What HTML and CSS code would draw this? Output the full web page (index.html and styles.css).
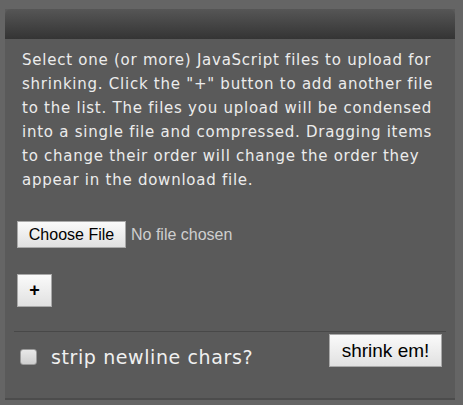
FILE: index.html
```html
<!DOCTYPE html>
<html>
<head>
<meta charset="utf-8">
<link rel="stylesheet" href="styles.css">
</head>
<body>
<div class="panel">
  <div class="panel-head"></div>
  <div class="panel-body">
    <p class="intro">Select one (or more) JavaScript files to upload for shrinking. Click the "+" button to add another file to the list. The files you upload will be condensed into a single file and compressed. Dragging items to change their order will change the order they appear in the download file.</p>
    <div class="file-row">
      <span class="btn file-btn">Choose File</span><span class="file-none">No file chosen</span>
    </div>
    <div class="add-row"><span class="btn add-btn">+</span></div>
    <div class="footer">
      <label class="strip"><span class="check"></span>strip newline chars?</label>
      <span class="btn shrink-btn">shrink em!</span>
    </div>
  </div>
</div>
</body>
</html>
```
FILE: styles.css
```css
html, body {
  margin: 0;
  padding: 0;
  background: #656565;
  height: 100%;
}
.panel {
  width: 450px;
  margin: 9px 0 0 5px;
  background: #5a5a5a;
  border-bottom: 2px solid #4c4c4c;
}
.panel-head {
  height: 30px;
  border-radius: 6px 6px 0 0;
  background: linear-gradient(#565656, #343434);
}
.panel-body {
  padding: 9px 9px 30px 9px;
}
.intro {
  margin: 0 0 0 8px;
  font-family: "DejaVu Sans", Verdana, sans-serif;
  font-size: 15px;
  letter-spacing: 0.75px;
  line-height: 24px;
  color: #ececec;
}
.btn {
  display: inline-flex;
  align-items: center;
  justify-content: center;
  box-sizing: border-box;
  border: 1px solid #a9a9a9;
  background: linear-gradient(#fafafa, #e1e1e1);
  color: #000;
  font-family: "Liberation Sans", Arial, sans-serif;
}
.file-row {
  display: flex;
  align-items: center;
  margin: 29px 0 0 3px;
  font-family: "Liberation Sans", Arial, sans-serif;
  font-size: 16px;
}
.file-btn {
  width: 109px;
  height: 27px;
  font-size: 16px;
  margin-right: 5px;
}
.file-none {
  color: #cfcfcf;
}
.add-row {
  margin: 26px 0 0 3px;
  display: flex;
}
.add-btn {
  width: 35px;
  height: 33px;
  font-size: 18px;
  font-weight: bold;
}
.footer {
  margin-top: 24px;
  border-top: 1px solid #484848;
  display: flex;
  justify-content: space-between;
  align-items: flex-start;
  padding-left: 6px;
  padding-top: 2px;
}
.strip {
  display: flex;
  align-items: center;
  margin-top: 12px;
  font-family: "DejaVu Sans", Verdana, sans-serif;
  font-size: 19px;
  letter-spacing: 0.6px;
  color: #f0f0f0;
}
.check {
  width: 17px;
  height: 16px;
  box-sizing: border-box;
  border: 1px solid #9a9a9a;
  border-radius: 3px;
  background: linear-gradient(#e8e8e8, #cfcfcf);
  margin-right: 14px;
}
.shrink-btn {
  width: 113px;
  height: 33px;
  font-size: 19px;
  margin-right: 4px;
}
```
